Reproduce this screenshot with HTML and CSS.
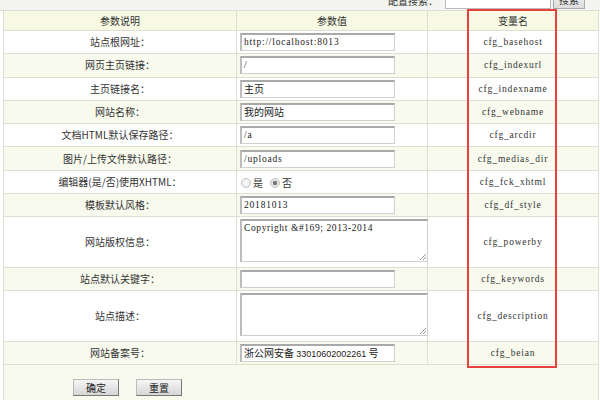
FILE: index.html
```html
<!DOCTYPE html>
<html lang="zh-CN">
<head>
<meta charset="utf-8">
<title>系统配置</title>
<link rel="stylesheet" href="styles.css">
</head>
<body>
<div class="page">
  <div class="topbar">
    <div class="search">
      <span class="search-label">配置搜索：</span>
      <span class="search-input"></span>
      <span class="search-btn">搜索</span>
    </div>
  </div>
  <table class="cfg">
    <colgroup><col class="c1"><col class="c2"><col class="c3"></colgroup>
    <tr class="head"><td>参数说明</td><td>参数值</td><td>变量名</td></tr>
    <tr><td class="lab">站点根网址：</td><td><span class="inp">http://localhost:8013</span></td><td class="var">cfg_basehost</td></tr>
    <tr class="alt"><td class="lab">网页主页链接：</td><td><span class="inp">/</span></td><td class="var">cfg_indexurl</td></tr>
    <tr><td class="lab">主页链接名：</td><td><span class="inp cn">主页</span></td><td class="var">cfg_indexname</td></tr>
    <tr class="alt"><td class="lab">网站名称：</td><td><span class="inp cn">我的网站</span></td><td class="var">cfg_webname</td></tr>
    <tr><td class="lab">文档HTML默认保存路径：</td><td><span class="inp">/a</span></td><td class="var">cfg_arcdir</td></tr>
    <tr class="alt"><td class="lab">图片/上传文件默认路径：</td><td><span class="inp">/uploads</span></td><td class="var">cfg_medias_dir</td></tr>
    <tr><td class="lab">编辑器(是/否)使用XHTML：</td><td><span class="radio"></span><span class="rlab">是</span><span class="radio on"></span><span class="rlab">否</span></td><td class="var">cfg_fck_xhtml</td></tr>
    <tr class="alt"><td class="lab">模板默认风格：</td><td><span class="inp">20181013</span></td><td class="var">cfg_df_style</td></tr>
    <tr class="tall"><td class="lab">网站版权信息：</td><td class="tacell"><span class="ta">Copyright &amp;#169; 2013-2014</span></td><td class="var">cfg_powerby</td></tr>
    <tr class="alt"><td class="lab">站点默认关键字：</td><td><span class="inp"></span></td><td class="var">cfg_keywords</td></tr>
    <tr class="tall"><td class="lab">站点描述：</td><td class="tacell"><span class="ta"></span></td><td class="var">cfg_description</td></tr>
    <tr class="alt"><td class="lab">网站备案号：</td><td><span class="inp cn">浙公网安备 <span class="num">33010602002261</span> 号</span></td><td class="var">cfg_beian</td></tr>
    <tr class="foot"><td colspan="3"><span class="btn">确定</span><span class="btn">重置</span></td></tr>
  </table>
  <div class="mark"></div>
</div>
</body>
</html>
```
FILE: styles.css
```css
html, body { margin: 0; padding: 0; background: #ffffff; }
body { font-family: "Noto Sans CJK SC", "Liberation Sans", sans-serif; font-size: 10px; line-height: 12px; color: #333; }
.page { position: relative; width: 600px; height: 400px; overflow: hidden; padding-left: 3px; box-sizing: border-box; }
.topbar { height: 10px; overflow: hidden; display: flex; justify-content: flex-end; background: #f4f5f2; border-bottom: 1px solid #d8dbcd; margin-left: -3px; }
.search { display: flex; align-items: flex-end; margin-top: -9px; height: 18px; margin-right: 15px; }
.search-label { font-size: 10px; color: #333; margin-right: 7px; line-height: 16px; }
.search-input { width: 104px; height: 16px; border: 1px solid #bbb; background: #fff; margin-right: 2px; }
.search-btn { width: 30px; height: 16px; border: 1px solid #aaa; background: linear-gradient(#f4f4f4, #dcdcdc); text-align: center; line-height: 15px; }
.cfg { border-collapse: collapse; width: 595px; table-layout: fixed; margin-top: -1px; }
.c1 { width: 233px; } .c2 { width: 191px; } .c3 { width: 171px; }
.cfg td { border: 1px solid #dcdfd2; height: 22.3px; padding: 0; text-align: center; vertical-align: middle; background: #fff; line-height: 12px; }
.cfg tr.alt td, .cfg tr.foot td { background: #f8faee; }
.cfg tr.head td { height: 19px; background: #f7f9e4; font-size: 10px; }
.cfg td:nth-child(2) { text-align: left; padding-left: 3px; }
.cfg tr.head td:nth-child(2) { text-align: center; padding-left: 0; }
.cfg tr.tall td { height: 46.6px; }
.cfg td.tacell { padding: 2px 0 1px 3px; vertical-align: top; }
.cfg td.var { font-family: "Liberation Serif", serif; font-size: 9.5px; letter-spacing: 0.8px; }
.cfg tr.foot td { height: 37px; text-align: left; vertical-align: top; padding-top: 14px; }
.lab { font-size: 10px; }
.inp { display: block; box-sizing: border-box; width: 155px; height: 18px; border: 1px solid #cfcfcf; border-top: 2px solid #a9a9a9; border-left: 2px solid #bdbdbd; background: #fff; font-family: "Liberation Serif", serif; font-size: 9.5px; line-height: 14px; padding-left: 2px; color: #222; white-space: nowrap; overflow: hidden; letter-spacing: 0.8px; }
.inp.cn { font-family: "Noto Sans CJK SC", sans-serif; font-size: 10px; letter-spacing: 0; }
.num { font-family: "Liberation Sans", sans-serif; font-size: 9px; letter-spacing: 0; }
.ta { display: block; box-sizing: border-box; width: 188px; height: 43px; border: 1px solid #cfcfcf; border-top: 2px solid #a9a9a9; border-left: 2px solid #bdbdbd; background: #fff; font-family: "Liberation Serif", serif; font-size: 9.5px; line-height: 12px; padding: 1px 2px; position: relative; color: #222; letter-spacing: 0.6px; }
.ta::after { content: ""; position: absolute; right: 1px; bottom: 1px; width: 6px; height: 6px; background: linear-gradient(135deg, transparent 45%, #999 45%, #999 55%, transparent 55%, transparent 70%, #999 70%, #999 80%, transparent 80%); }
.radio { display: inline-block; width: 8px; height: 8px; border-radius: 50%; border: 1px solid #c4c4c4; background: radial-gradient(#fff, #e4e4e4); vertical-align: middle; margin: 0 2px 0 1px; }
.radio.on { background: radial-gradient(circle, #777 0 2px, #e6e6e6 2.5px); }
.rlab { font-size: 10px; margin-right: 6px; vertical-align: middle; }
.btn { display: inline-block; box-sizing: border-box; width: 46px; height: 17px; margin-left: 69px; border: 1px solid #bbb; border-right-color: #777; border-bottom-color: #777; background: linear-gradient(#f6f6f6, #d6d6d6); text-align: center; line-height: 15px; font-size: 10px; color: #222; }
.btn + .btn { margin-left: 17px; }
.mark { position: absolute; left: 467px; top: 9px; width: 90px; height: 359px; border: 2px solid #e5413f; box-sizing: border-box; }
```
